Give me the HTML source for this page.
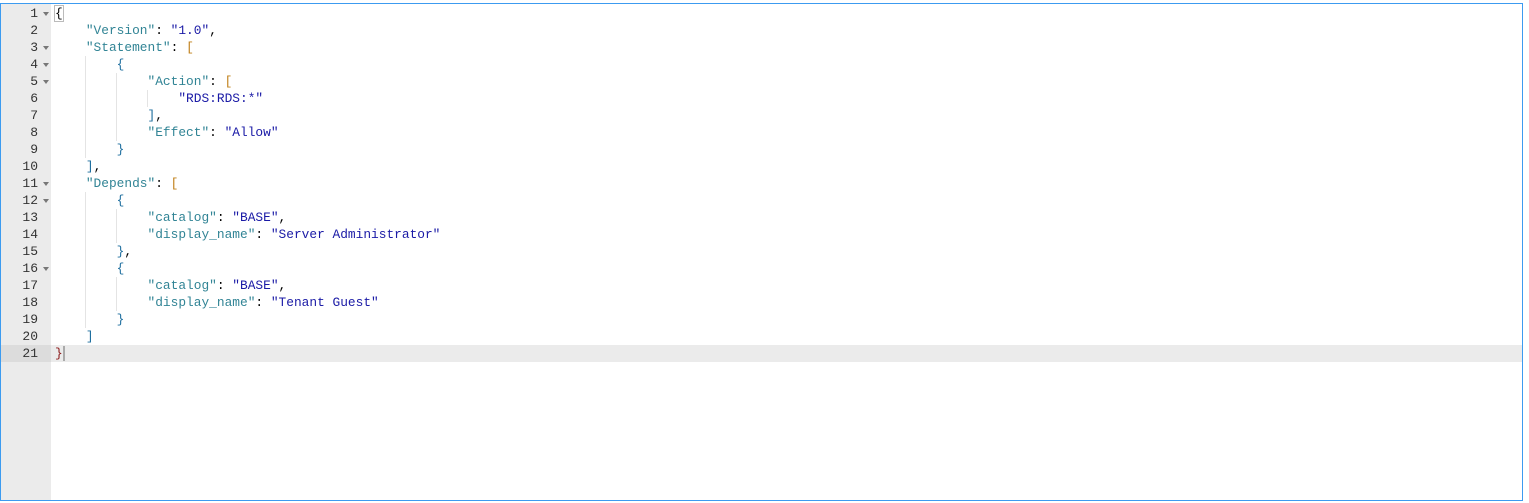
<!DOCTYPE html>
<html><head><style>
html,body{margin:0;padding:0;background:#fff;width:1529px;height:503px;overflow:hidden}
.ed{position:absolute;left:0;top:3px;width:1521px;height:496px;border:1px solid #3c9bf0;background:#fff;overflow:hidden}
.gut{position:absolute;left:0;top:0;width:50px;height:100%;background:#ebebeb}
.ln{position:absolute;left:0;width:50px;height:17px;font:13px/17px "Liberation Mono",monospace;color:#333;text-align:right;box-sizing:border-box;padding-right:13px}
.fold{position:absolute;left:42px;width:0;height:0;border-left:3px solid transparent;border-right:3px solid transparent;border-top:4px solid #777}
.act{position:absolute;left:50px;right:0;height:17px;background:#ebebeb}
.actg{position:absolute;left:0;width:50px;height:17px;background:#dcdcdc}
.code{position:absolute;left:54px;top:1px;font:12.85px/17px "Liberation Mono",monospace;color:#000;white-space:pre}
.k{color:#318495}.s{color:#1a1aa6}.o{color:#c0801a}.b{color:#1f6f9f}
.g{position:absolute;width:0;border-left:1px solid #e4e4e4}
</style></head><body>
<div class="ed">
<div class="gut"></div>
<div class="actg" style="top:341px"></div>
<div class="act" style="top:341px"></div>
<div class="g" style="left:84px;top:52px;height:102px"></div>
<div class="g" style="left:115px;top:69px;height:68px"></div>
<div class="g" style="left:146px;top:86px;height:17px"></div>
<div class="g" style="left:84px;top:188px;height:136px"></div>
<div class="g" style="left:115px;top:205px;height:34px"></div>
<div class="g" style="left:115px;top:273px;height:34px"></div>
<div class="code"><span style="outline:1px solid #bbb">{</span>
    <span class="k">"Version"</span>: <span class="s">"1.0"</span>,
    <span class="k">"Statement"</span>: <span class="o">[</span>
        <span class="b">{</span>
            <span class="k">"Action"</span>: <span class="o">[</span>
                <span class="s">"RDS:RDS:*"</span>
            <span class="b">]</span>,
            <span class="k">"Effect"</span>: <span class="s">"Allow"</span>
        <span class="b">}</span>
    <span class="b">]</span>,
    <span class="k">"Depends"</span>: <span class="o">[</span>
        <span class="b">{</span>
            <span class="k">"catalog"</span>: <span class="s">"BASE"</span>,
            <span class="k">"display_name"</span>: <span class="s">"Server Administrator"</span>
        <span class="b">}</span>,
        <span class="b">{</span>
            <span class="k">"catalog"</span>: <span class="s">"BASE"</span>,
            <span class="k">"display_name"</span>: <span class="s">"Tenant Guest"</span>
        <span class="b">}</span>
    <span class="b">]</span>
<span style="color:#8b1a1a">}</span><span style="border-left:2px solid #aaa"></span></div>
<div class="ln" style="top:1px">1</div><div class="fold" style="top:8px"></div>
<div class="ln" style="top:18px">2</div>
<div class="ln" style="top:35px">3</div><div class="fold" style="top:42px"></div>
<div class="ln" style="top:52px">4</div><div class="fold" style="top:59px"></div>
<div class="ln" style="top:69px">5</div><div class="fold" style="top:76px"></div>
<div class="ln" style="top:86px">6</div>
<div class="ln" style="top:103px">7</div>
<div class="ln" style="top:120px">8</div>
<div class="ln" style="top:137px">9</div>
<div class="ln" style="top:154px">10</div>
<div class="ln" style="top:171px">11</div><div class="fold" style="top:178px"></div>
<div class="ln" style="top:188px">12</div><div class="fold" style="top:195px"></div>
<div class="ln" style="top:205px">13</div>
<div class="ln" style="top:222px">14</div>
<div class="ln" style="top:239px">15</div>
<div class="ln" style="top:256px">16</div><div class="fold" style="top:263px"></div>
<div class="ln" style="top:273px">17</div>
<div class="ln" style="top:290px">18</div>
<div class="ln" style="top:307px">19</div>
<div class="ln" style="top:324px">20</div>
<div class="ln" style="top:341px">21</div>
</div>
</body></html>
